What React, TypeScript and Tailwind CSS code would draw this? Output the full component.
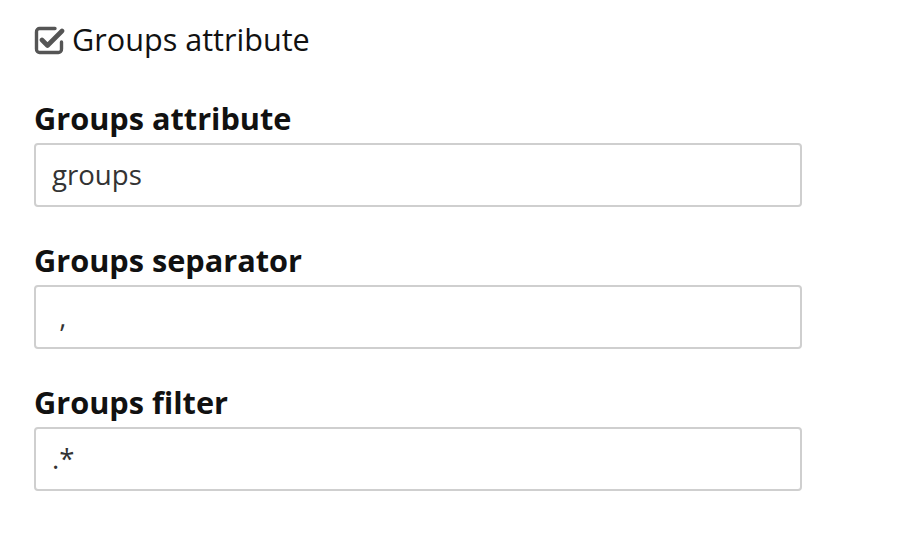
import React from "react";

function CheckIcon() {
  return (
    <svg width="31" height="30" viewBox="0 0 31 30" className="shrink-0">
      <path
        d="M21 3.5 H6 A3.2 3.2 0 0 0 2.5 7 V24 A3.2 3.2 0 0 0 6 27.5 H24 A3.2 3.2 0 0 0 27.5 24 V17"
        fill="none"
        stroke="#555"
        strokeWidth="3.4"
        strokeLinecap="round"
      />
      <path
        d="M8 15 L13.5 20.5 L28 6"
        fill="none"
        stroke="#555"
        strokeWidth="4.6"
        strokeLinecap="round"
        strokeLinejoin="round"
      />
    </svg>
  );
}

function Field({ label, value }: { label: string; value: string }) {
  return (
    <div className="flex flex-col">
      <div className="text-[30.7px] font-bold leading-[40px] text-[#111] mb-[5px]">{label}</div>
      <div className="w-[768px] h-[64px] border-2 border-[#cfcfcf] rounded-[4px] flex items-center pl-[16px] text-[27.6px] text-[#333] whitespace-pre">
        {value}
      </div>
    </div>
  );
}

export default function App() {
  return (
    <div
      className="w-[908px] h-[542px] bg-white pl-[34px] pt-[20px]"
      style={{ fontFamily: '"Open Sans", sans-serif' }}
    >
      <div className="flex items-center gap-[7px] h-[40px] text-[30.6px] text-[#111]">
        <CheckIcon />
        <span>Groups attribute</span>
      </div>
      <div className="flex flex-col gap-[33px] mt-[38px]">
        <Field label="Groups attribute" value="groups" />
        <Field label="Groups separator" value=" ," />
        <Field label="Groups filter" value=".*" />
      </div>
    </div>
  );
}
